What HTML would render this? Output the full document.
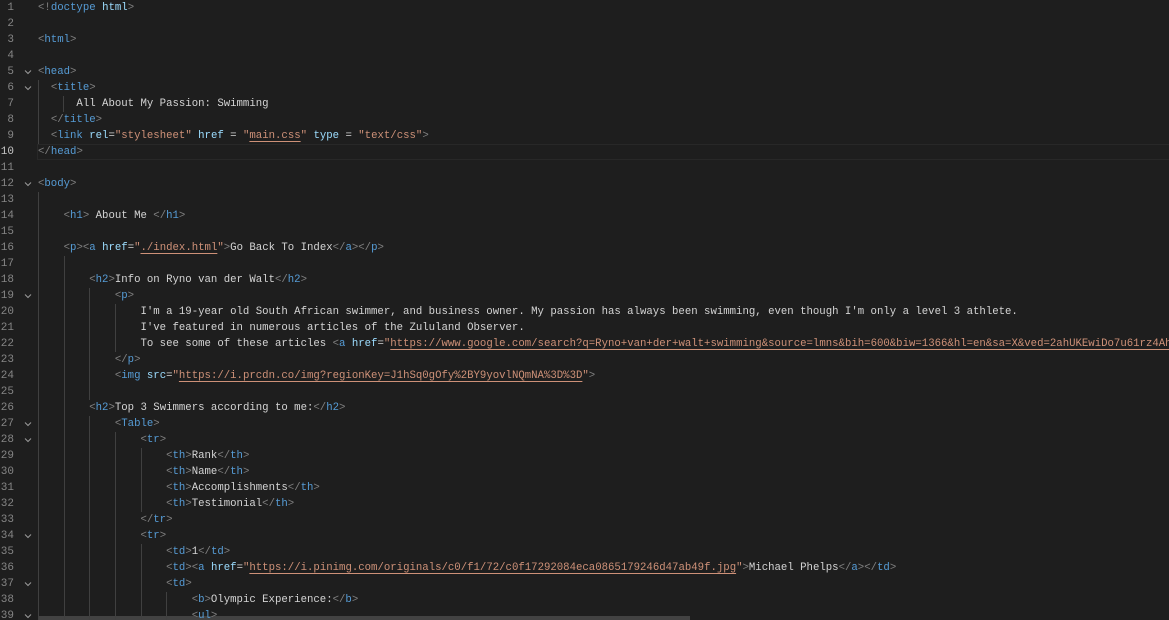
<!DOCTYPE html>
<html><head><meta charset="utf-8"><style>
html,body{margin:0;padding:0;background:#1e1e1e;width:1169px;height:620px;overflow:hidden;position:relative}
.l{position:absolute;left:38px;height:16px;line-height:17px;white-space:pre;font-family:"Liberation Mono",monospace;font-size:10.68px;color:#d4d4d4}
.n{position:absolute;width:14px;text-align:right;left:0;height:16px;line-height:17px;font-family:"Liberation Mono",monospace;font-size:11px;color:#858585}
.n.c{color:#c6c6c6}
.f{position:absolute;left:23px;width:10px;height:16px}
.g{position:absolute;width:1px;height:16px;background:#404040}
.b{color:#808080}.t{color:#569cd6}.a{color:#9cdcfe}.s{color:#ce9178}
.u{text-decoration:underline;text-decoration-color:#ce9178;text-underline-offset:3px}
</style></head><body>
<div style="position:absolute;left:37px;top:144px;width:1140px;height:14px;border:1px solid #282828"></div>
<div style="position:absolute;left:38px;top:616px;width:652px;height:4px;background:#424242"></div>
<div id="c"></div>
<div class="l" style="top:0"><span class="b">&lt;!</span><span class="t">doctype</span> <span class="a">html</span><span class="b">&gt;</span></div>
<div class="l" style="top:32px"><span class="b">&lt;</span><span class="t">html</span><span class="b">&gt;</span></div>
<div class="l" style="top:64px"><span class="b">&lt;</span><span class="t">head</span><span class="b">&gt;</span></div>
<div class="l" style="top:80px">  <span class="b">&lt;</span><span class="t">title</span><span class="b">&gt;</span></div>
<div class="l" style="top:96px">      All About My Passion: Swimming</div>
<div class="l" style="top:112px">  <span class="b">&lt;/</span><span class="t">title</span><span class="b">&gt;</span></div>
<div class="l" style="top:128px">  <span class="b">&lt;</span><span class="t">link</span> <span class="a">rel</span>=<span class="s">"stylesheet"</span> <span class="a">href</span> = <span class="s">"<span class="u">main.css</span>"</span> <span class="a">type</span> = <span class="s">"text/css"</span><span class="b">&gt;</span></div>
<div class="l" style="top:144px"><span class="b">&lt;/</span><span class="t">head</span><span class="b">&gt;</span></div>
<div class="l" style="top:176px"><span class="b">&lt;</span><span class="t">body</span><span class="b">&gt;</span></div>
<div class="l" style="top:208px">    <span class="b">&lt;</span><span class="t">h1</span><span class="b">&gt;</span> About Me <span class="b">&lt;/</span><span class="t">h1</span><span class="b">&gt;</span></div>
<div class="l" style="top:240px">    <span class="b">&lt;</span><span class="t">p</span><span class="b">&gt;&lt;</span><span class="t">a</span> <span class="a">href</span>=<span class="s">"<span class="u">./index.html</span>"</span><span class="b">&gt;</span>Go Back To Index<span class="b">&lt;/</span><span class="t">a</span><span class="b">&gt;&lt;/</span><span class="t">p</span><span class="b">&gt;</span></div>
<div class="l" style="top:272px">        <span class="b">&lt;</span><span class="t">h2</span><span class="b">&gt;</span>Info on Ryno van der Walt<span class="b">&lt;/</span><span class="t">h2</span><span class="b">&gt;</span></div>
<div class="l" style="top:288px">            <span class="b">&lt;</span><span class="t">p</span><span class="b">&gt;</span></div>
<div class="l" style="top:304px">                I'm a 19-year old South African swimmer, and business owner. My passion has always been swimming, even though I'm only a level 3 athlete.</div>
<div class="l" style="top:320px">                I've featured in numerous articles of the Zululand Observer.</div>
<div class="l" style="top:336px">                To see some of these articles <span class="b">&lt;</span><span class="t">a</span> <span class="a">href</span>=<span class="s">"<span class="u">https://www.google.com/search?q=Ryno+van+der+walt+swimming&amp;source=lmns&amp;bih=600&amp;biw=1366&amp;hl=en&amp;sa=X&amp;ved=2ahUKEwiDo7u61rz4AhVKgM4BHQ</span></span></div>
<div class="l" style="top:352px">            <span class="b">&lt;/</span><span class="t">p</span><span class="b">&gt;</span></div>
<div class="l" style="top:368px">            <span class="b">&lt;</span><span class="t">img</span> <span class="a">src</span>=<span class="s">"<span class="u">https://i.prcdn.co/img?regionKey=J1hSq0gOfy%2BY9yovlNQmNA%3D%3D</span>"</span><span class="b">&gt;</span></div>
<div class="l" style="top:400px">        <span class="b">&lt;</span><span class="t">h2</span><span class="b">&gt;</span>Top 3 Swimmers according to me:<span class="b">&lt;/</span><span class="t">h2</span><span class="b">&gt;</span></div>
<div class="l" style="top:416px">            <span class="b">&lt;</span><span class="t">Table</span><span class="b">&gt;</span></div>
<div class="l" style="top:432px">                <span class="b">&lt;</span><span class="t">tr</span><span class="b">&gt;</span></div>
<div class="l" style="top:448px">                    <span class="b">&lt;</span><span class="t">th</span><span class="b">&gt;</span>Rank<span class="b">&lt;/</span><span class="t">th</span><span class="b">&gt;</span></div>
<div class="l" style="top:464px">                    <span class="b">&lt;</span><span class="t">th</span><span class="b">&gt;</span>Name<span class="b">&lt;/</span><span class="t">th</span><span class="b">&gt;</span></div>
<div class="l" style="top:480px">                    <span class="b">&lt;</span><span class="t">th</span><span class="b">&gt;</span>Accomplishments<span class="b">&lt;/</span><span class="t">th</span><span class="b">&gt;</span></div>
<div class="l" style="top:496px">                    <span class="b">&lt;</span><span class="t">th</span><span class="b">&gt;</span>Testimonial<span class="b">&lt;/</span><span class="t">th</span><span class="b">&gt;</span></div>
<div class="l" style="top:512px">                <span class="b">&lt;/</span><span class="t">tr</span><span class="b">&gt;</span></div>
<div class="l" style="top:528px">                <span class="b">&lt;</span><span class="t">tr</span><span class="b">&gt;</span></div>
<div class="l" style="top:544px">                    <span class="b">&lt;</span><span class="t">td</span><span class="b">&gt;</span>1<span class="b">&lt;/</span><span class="t">td</span><span class="b">&gt;</span></div>
<div class="l" style="top:560px">                    <span class="b">&lt;</span><span class="t">td</span><span class="b">&gt;&lt;</span><span class="t">a</span> <span class="a">href</span>=<span class="s">"<span class="u">https://i.pinimg.com/originals/c0/f1/72/c0f17292084eca0865179246d47ab49f.jpg</span>"</span><span class="b">&gt;</span>Michael Phelps<span class="b">&lt;/</span><span class="t">a</span><span class="b">&gt;&lt;/</span><span class="t">td</span><span class="b">&gt;</span></div>
<div class="l" style="top:576px">                    <span class="b">&lt;</span><span class="t">td</span><span class="b">&gt;</span></div>
<div class="l" style="top:592px">                        <span class="b">&lt;</span><span class="t">b</span><span class="b">&gt;</span>Olympic Experience:<span class="b">&lt;/</span><span class="t">b</span><span class="b">&gt;</span></div>
<div class="l" style="top:608px">                        <span class="b">&lt;</span><span class="t">ul</span><span class="b">&gt;</span></div>
<script>
var c=document.getElementById('c'),h='';
var ind={6:2,7:6,8:2,9:2,13:1,14:4,15:1,16:4,17:5,18:8,19:12,20:16,21:16,22:16,23:12,24:12,25:9,26:8,27:12,28:16,29:20,30:20,31:20,32:20,33:16,34:16,35:20,36:20,37:20,38:24,39:24};
var folds=[5,6,12,19,27,28,34,37,39];
for(var i=1;i<=39;i++){
 var y=(i-1)*16;
 h+='<div class="n'+(i==10?' c':'')+'" style="top:'+y+'px">'+i+'</div>';
 if(folds.indexOf(i)>=0)h+='<svg class="f" style="top:'+y+'px" viewBox="0 0 10 16"><path d="M2 6.5l3 3 3-3" fill="none" stroke="#9a9a9a" stroke-width="1"/></svg>';
 var d=ind[i]||0;
 if(i>=6&&i<=9){h+='<div class="g" style="left:38px;top:'+y+'px"></div>';if(i==7)h+='<div class="g" style="left:63px;top:'+y+'px"></div>';continue;}
 if(i>=13){for(var k=0;4*k<Math.max(d,1);k++){h+='<div class="g" style="left:'+Math.round(38+25.63*k)+'px;top:'+y+'px"></div>';}}
}
c.innerHTML=h;
</script>
</body></html>
